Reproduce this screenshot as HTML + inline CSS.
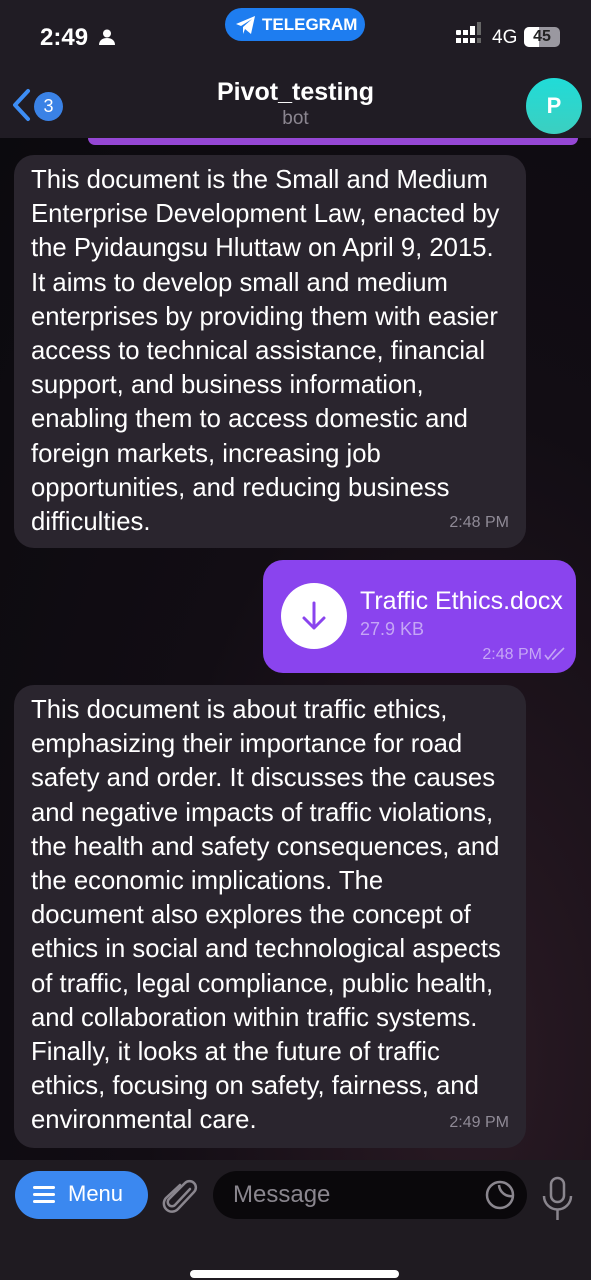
<!DOCTYPE html>
<html><head><meta charset="utf-8"><style>
*{margin:0;padding:0;box-sizing:border-box}
body{width:591px;height:1280px;overflow:hidden;background:#0e0b11;font-family:"Liberation Sans",sans-serif;position:relative;color:#fff}
.chat{position:absolute;left:0;top:138px;width:591px;height:1022px;background:radial-gradient(ellipse at 80% 90%,#2a1a24 0%,#120d14 50%,#0b0a0e 100%)}
.hdr{position:absolute;left:0;top:0;width:591px;height:138px;background:#201c24}
.bub{position:absolute;background:#2a252e;border-radius:20px;font-size:25.7px;line-height:34.2px;color:#fff;padding:8px 0 0 17px;white-space:nowrap}
.time{position:absolute;right:17px;bottom:8px;font-size:16px;color:#8f8a96}
.bot{position:absolute;left:0;top:1160px;width:591px;height:120px;background:#1f1b21}
</style></head><body>
<div class="chat"></div>
<div class="hdr">
 <div style="position:absolute;left:40px;top:24px;font-size:24px;font-weight:bold">2:49</div>
 <svg style="position:absolute;left:99px;top:29px" width="16" height="16" viewBox="0 0 16 16"><circle cx="8" cy="4.5" r="4" fill="#fff"/><path d="M0 16c0-5 4-7 8-7s8 2 8 7z" fill="#fff"/></svg>
 <div style="position:absolute;left:225px;top:8px;width:140px;height:33px;border-radius:17px;background:#1e7df0;font-size:17px;font-weight:bold;line-height:33px;padding-left:37px">TELEGRAM</div>
 <svg style="position:absolute;left:235px;top:15px" width="22" height="20" viewBox="0 0 22 20"><path d="M1 9 L20 1 L16 19 L10 14 L8 19 L8 12 L17 4 L6 11z" fill="#fff"/></svg>
 <div style="position:absolute;left:456px;top:30px">
  <div style="position:absolute;left:0;top:0;width:5px;height:5px;background:#fff;border-radius:1px"></div><div style="position:absolute;left:7px;top:0;width:5px;height:5px;background:#fff"></div><div style="position:absolute;left:14px;top:-4px;width:5px;height:9px;background:#fff"></div><div style="position:absolute;left:21px;top:-8px;width:4px;height:13px;background:#666"></div>
  <div style="position:absolute;left:0;top:8px;width:5px;height:5px;background:#fff"></div><div style="position:absolute;left:7px;top:8px;width:5px;height:5px;background:#fff"></div><div style="position:absolute;left:14px;top:8px;width:5px;height:5px;background:#fff"></div><div style="position:absolute;left:21px;top:8px;width:4px;height:5px;background:#666"></div>
 </div>
 <div style="position:absolute;left:492px;top:27px;font-size:19px">4G</div>
 <div style="position:absolute;left:524px;top:27px;width:36px;height:20px;border-radius:5px;background:#9a98a0;overflow:hidden"><div style="width:15px;height:20px;background:#fff"></div><div style="position:absolute;left:0;top:0;width:36px;text-align:center;font-size:16px;font-weight:bold;color:#222;line-height:20px">45</div></div>
 <svg style="position:absolute;left:10px;top:88px" width="22" height="34" viewBox="0 0 22 34"><path d="M18 3 L5 17 L18 31" stroke="#3d8df5" stroke-width="4" fill="none" stroke-linecap="round" stroke-linejoin="round"/></svg>
 <div style="position:absolute;left:34px;top:92px;width:29px;height:29px;border-radius:50%;background:#3a82e6;font-size:18px;text-align:center;line-height:29px">3</div>
 <div style="position:absolute;left:0;width:591px;top:78px;text-align:center;font-size:25px;font-weight:bold">Pivot_testing</div>
 <div style="position:absolute;left:0;width:591px;top:108px;text-align:center;font-size:19px;color:#8b8690">bot</div>
 <div style="position:absolute;left:526px;top:78px;width:56px;height:56px;border-radius:50%;background:linear-gradient(#20dcd8,#3ccfc0);font-size:22px;font-weight:bold;text-align:center;line-height:56px">P</div>
</div>
<div style="position:absolute;left:88px;top:138px;width:490px;height:7px;background:#9547d4;border-radius:0 0 10px 10px"></div>
<div class="bub" style="left:14px;top:155px;width:512px;height:393px">This document is the Small and Medium<br>Enterprise Development Law, enacted by<br>the Pyidaungsu Hluttaw on April 9, 2015.<br>It aims to develop small and medium<br>enterprises by providing them with easier<br>access to technical assistance, financial<br>support, and business information,<br>enabling them to access domestic and<br>foreign markets, increasing job<br>opportunities, and reducing business<br>difficulties.<div class="time">2:48 PM</div></div>
<div style="position:absolute;left:263px;top:560px;width:313px;height:113px;background:#8a44ee;border-radius:20px">
 <div style="position:absolute;left:18px;top:23px;width:66px;height:66px;border-radius:50%;background:#fff"></div>
 <svg style="position:absolute;left:38px;top:41px" width="26" height="30" viewBox="0 0 26 30"><path d="M13 2 V27 M3 17 L13 27 L23 17" stroke="#8a44ee" stroke-width="3" fill="none" stroke-linecap="round" stroke-linejoin="round"/></svg>
 <div style="position:absolute;left:97px;top:27px;font-size:25px;white-space:nowrap">Traffic Ethics.docx</div>
 <div style="position:absolute;left:97px;top:59px;font-size:18px;color:#c5a6f5">27.9 KB</div>
 <div style="position:absolute;right:34px;bottom:9px;font-size:16px;color:#c5a6f5">2:48 PM</div>
 <svg style="position:absolute;right:10px;bottom:12px" width="22" height="14" viewBox="0 0 22 14"><path d="M1 8 L4 12 L12 2 M8 12 L9 12 L20 1" stroke="#c5a6f5" stroke-width="1.6" fill="none"/></svg>
</div>
<div class="bub" style="left:14px;top:685px;width:512px;height:463px">This document is about traffic ethics,<br>emphasizing their importance for road<br>safety and order. It discusses the causes<br>and negative impacts of traffic violations,<br>the health and safety consequences, and<br>the economic implications. The<br>document also explores the concept of<br>ethics in social and technological aspects<br>of traffic, legal compliance, public health,<br>and collaboration within traffic systems.<br>Finally, it looks at the future of traffic<br>ethics, focusing on safety, fairness, and<br>environmental care.<div class="time">2:49 PM</div></div>
<div class="bot">
 <div style="position:absolute;left:15px;top:11px;width:133px;height:48px;border-radius:24px;background:#3b88f0"></div>
 <div style="position:absolute;left:33px;top:26px;width:22px;height:3px;background:#fff;box-shadow:0 7px 0 #fff,0 14px 0 #fff;border-radius:2px"></div>
 <div style="position:absolute;left:68px;top:21px;font-size:22px">Menu</div>
 <svg style="position:absolute;left:162px;top:17px" width="36" height="40" viewBox="0 0 36 40"><path d="M28 12 L13 28 a4 4 0 0 1 -6 -6 L23 6 a6 6 0 0 1 9 9 L16 32 a8 8 0 0 1 -12 -11 L18 8" stroke="#8a868e" stroke-width="2.5" fill="none" stroke-linecap="round"/></svg>
 <div style="position:absolute;left:213px;top:11px;width:314px;height:48px;border-radius:24px;background:#0a080b"></div>
 <div style="position:absolute;left:233px;top:21px;font-size:24px;color:#8a868e">Message</div>
 <svg style="position:absolute;left:484px;top:19px" width="32" height="32" viewBox="0 0 32 32"><circle cx="16" cy="16" r="13" stroke="#8a868e" stroke-width="2.5" fill="none"/><path d="M29 17 A12 12 0 0 1 15 6" stroke="#8a868e" stroke-width="2.5" fill="none"/></svg>
 <svg style="position:absolute;left:540px;top:16px" width="36" height="46" viewBox="0 0 36 46"><rect x="11" y="2" width="13" height="24" rx="6.5" stroke="#8a868e" stroke-width="2.5" fill="none"/><path d="M4 20 a13.5 13.5 0 0 0 27 0 M17.5 34 V44" stroke="#8a868e" stroke-width="2.5" fill="none"/></svg>
 <div style="position:absolute;left:190px;top:110px;width:209px;height:8px;border-radius:4px;background:#fff"></div>
</div>
</body></html>
